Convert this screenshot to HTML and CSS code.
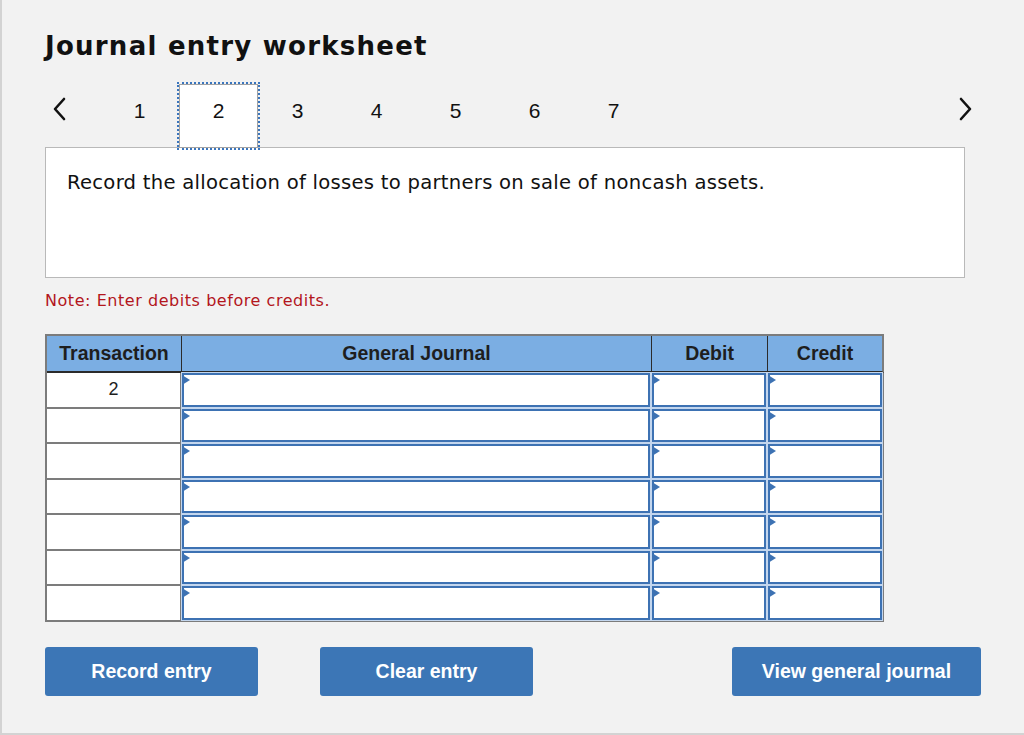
FILE: index.html
```html
<!DOCTYPE html>
<html lang="en">
<head>
<meta charset="utf-8">
<title>Journal entry worksheet</title>
<link rel="stylesheet" href="styles.css">
</head>
<body>
<div class="page">
  <h1 class="title">Journal entry worksheet</h1>

  <div class="tabs">
    <div class="nav nav-prev">
      <svg width="14" height="24" viewBox="0 0 14 24"><polyline points="12,2 3,12 12,22" fill="none" stroke="#111" stroke-width="2.6" stroke-linecap="round" stroke-linejoin="round"/></svg>
    </div>
    <div class="tab">1</div>
    <div class="tab active">2</div>
    <div class="tab">3</div>
    <div class="tab">4</div>
    <div class="tab">5</div>
    <div class="tab">6</div>
    <div class="tab">7</div>
    <div class="nav nav-next">
      <svg width="14" height="24" viewBox="0 0 14 24"><polyline points="2,2 11,12 2,22" fill="none" stroke="#111" stroke-width="2.6" stroke-linecap="round" stroke-linejoin="round"/></svg>
    </div>
  </div>

  <div class="prompt">Record the allocation of losses to partners on sale of noncash assets.</div>

  <p class="note">Note: Enter debits before credits.</p>

  <table class="journal">
    <thead>
      <tr>
        <th class="c-tr">Transaction</th>
        <th class="c-gj">General Journal</th>
        <th class="c-dr">Debit</th>
        <th class="c-cr">Credit</th>
      </tr>
    </thead>
    <tbody>
      <tr><td class="tr-cell">2</td><td><div class="inp"></div></td><td><div class="inp"></div></td><td><div class="inp"></div></td></tr>
      <tr><td class="tr-cell"></td><td><div class="inp"></div></td><td><div class="inp"></div></td><td><div class="inp"></div></td></tr>
      <tr><td class="tr-cell"></td><td><div class="inp"></div></td><td><div class="inp"></div></td><td><div class="inp"></div></td></tr>
      <tr><td class="tr-cell"></td><td><div class="inp"></div></td><td><div class="inp"></div></td><td><div class="inp"></div></td></tr>
      <tr><td class="tr-cell"></td><td><div class="inp"></div></td><td><div class="inp"></div></td><td><div class="inp"></div></td></tr>
      <tr><td class="tr-cell"></td><td><div class="inp"></div></td><td><div class="inp"></div></td><td><div class="inp"></div></td></tr>
      <tr><td class="tr-cell"></td><td><div class="inp"></div></td><td><div class="inp"></div></td><td><div class="inp"></div></td></tr>
    </tbody>
  </table>

  <div class="actions">
    <div class="group">
      <button class="btn btn-record">Record entry</button>
      <button class="btn btn-clear">Clear entry</button>
    </div>
    <button class="btn btn-view">View general journal</button>
  </div>
</div>
</body>
</html>
```

FILE: styles.css
```css
html, body {
  margin: 0;
  padding: 0;
  background: #f2f2f2;
}

.page {
  box-sizing: border-box;
  width: 1024px;
  height: 735px;
  background: #f2f2f2;
  border-left: 2px solid #d3d3d3;
  border-bottom: 2px solid #d3d3d3;
  padding: 31px 0 0 43px;
  overflow: hidden;
}

.title {
  margin: 0;
  font-family: "DejaVu Sans", Verdana, sans-serif;
  font-weight: bold;
  font-size: 26px;
  line-height: 30px;
  letter-spacing: 1.25px;
  color: #111;
}

.tabs {
  display: flex;
  width: 928px;
  height: 64px;
  margin-top: 23px;
  margin-bottom: -1px;
  font-family: "Liberation Sans", Arial, sans-serif;
  font-size: 21px;
  color: #111;
}

.nav {
  display: flex;
  align-items: flex-start;
  padding-top: 13px;
  box-sizing: border-box;
}

.nav-prev {
  width: 55px;
  padding-left: 7px;
}

.nav-next {
  margin-left: auto;
}

.tab {
  width: 79px;
  box-sizing: border-box;
  text-align: center;
  padding-top: 15px;
  line-height: 24px;
}

.tab.active {
  position: relative;
  z-index: 1;
  background: #fff;
  border: 1px solid #a3a3a3;
  padding-top: 14px;
  outline: 2px dotted #3a75bd;
  outline-offset: 0;
}

.prompt {
  box-sizing: border-box;
  width: 920px;
  height: 131px;
  background: #fff;
  border: 1px solid #b9b9b9;
  padding: 23px 0 0 21px;
  font-family: "DejaVu Sans", Verdana, sans-serif;
  font-size: 19.6px;
  line-height: 24px;
  letter-spacing: 0.27px;
  color: #111;
}

.note {
  margin: 13px 0 0;
  font-family: "DejaVu Sans", Verdana, sans-serif;
  font-size: 16px;
  line-height: 20px;
  letter-spacing: 0.55px;
  color: #b3161d;
}

.journal {
  margin-top: 23px;
  border-spacing: 0;
  border-collapse: separate;
  border-top: 2px solid #7c7c7c;
  border-left: 2px solid #7c7c7c;
  font-family: "Liberation Sans", Arial, sans-serif;
  table-layout: fixed;
}

.journal th {
  background: #7baee3;
  color: #1e1e1e;
  font-weight: bold;
  font-size: 19.5px;
  height: 35px;
  padding: 0;
  border-right: 1px solid #2b2b2b;
  border-bottom: 2px solid #2b2b2b;
  text-align: center;
}

.journal th.c-cr {
  border-right: 2px solid #7c7c7c;
}

.c-tr { width: 134px; }
.c-gj { width: 469px; }
.c-dr { width: 115px; }
.c-cr { width: 114px; }

.journal td {
  height: 33.5px;
  padding: 0;
  background: #fff;
  border-right: 2px solid #7c7c7c;
  border-bottom: 2px solid #7c7c7c;
}

.journal td.tr-cell {
  text-align: center;
  font-size: 18px;
  color: #1e1e1e;
}

.inp {
  position: relative;
  box-sizing: border-box;
  height: 33.5px;
  background: #fff;
  border: 2px solid #3d72b3;
  box-shadow: 0 0 0 1px #c3d6ee;
}

.inp::before {
  content: "";
  position: absolute;
  left: -2px;
  top: 0;
  width: 0;
  height: 0;
  border-left: 8px solid #3d72b3;
  border-top: 5px solid transparent;
  border-bottom: 5px solid transparent;
}

.actions {
  display: flex;
  margin-top: 25px;
}

.group {
  display: flex;
  gap: 62px;
}

.btn {
  height: 49px;
  border: none;
  border-radius: 3px;
  background: #3c76b6;
  color: #fff;
  font-family: "Liberation Sans", Arial, sans-serif;
  font-weight: bold;
  font-size: 19.5px;
  padding: 0;
}

.btn-record,
.btn-clear {
  width: 213px;
}

.btn-view {
  width: 249px;
  margin-left: 199px;
}
```
